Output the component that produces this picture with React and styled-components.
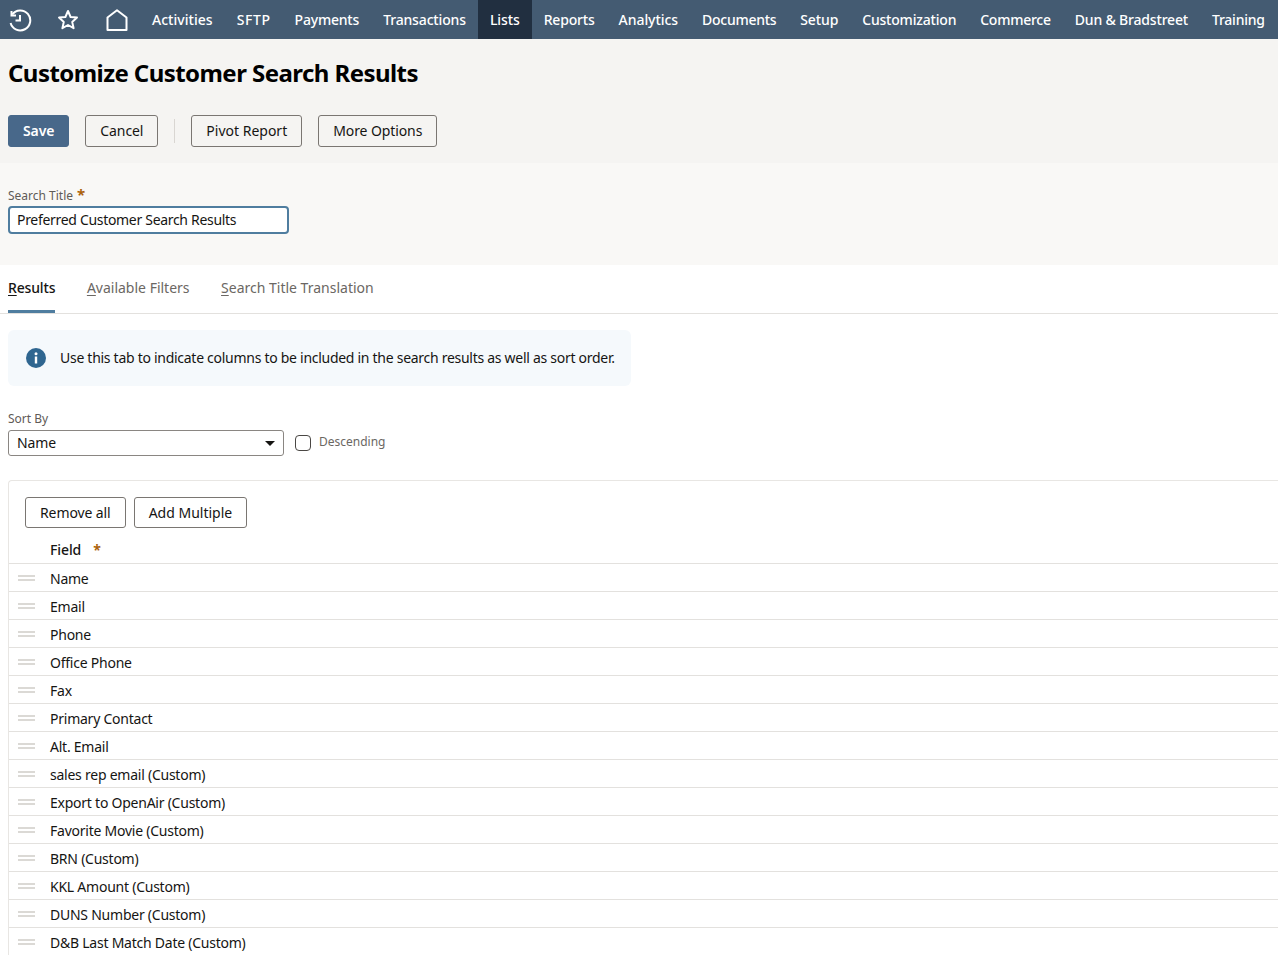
import styled, { createGlobalStyle } from 'styled-components';

const GlobalStyle = createGlobalStyle`
  html, body {
    margin: 0;
    padding: 0;
    height: 955px;
    overflow: hidden;
    background: #fff;
    font-family: "Noto Sans", "Open Sans", sans-serif;
    color: #161513;
  }
`;

const NavBar = styled.nav`
  display: flex;
  align-items: stretch;
  height: 39px;
  background: #445b72;
  white-space: nowrap;
`;

const NavIcon = styled.div`
  display: flex;
  flex-shrink: 0;
  align-items: center;
  justify-content: center;
  width: ${(p) => p.$width}px;
  color: #fff;
`;

const NavItem = styled.a`
  display: flex;
  align-items: center;
  padding: 0 12px;
  font-size: 14px;
  font-weight: 500;
  letter-spacing: ${(p) => p.$spacing}px;
  color: #fff;
  background: ${(p) => (p.$active ? '#212f40' : 'transparent')};
`;

const PageHeader = styled.header`
  background: #f5f4f2;
  padding: 17px 8px 16px;
  height: 124px;
  box-sizing: border-box;
`;

const Title = styled.h1`
  margin: 0 0 26px;
  font-size: 24px;
  line-height: 33px;
  font-weight: 700;
  letter-spacing: -0.56px;
  color: #000;
`;

const Toolbar = styled.div`
  display: flex;
  align-items: center;
  gap: 16px;
`;

const Button = styled.button`
  height: 32px;
  padding: 0 14px 2px;
  border: 1px solid #7a7672;
  border-radius: 3px;
  background: transparent;
  font-family: inherit;
  font-size: 14px;
  letter-spacing: -0.1px;
  color: #161513;
`;

const WideButton = styled(Button)`
  letter-spacing: 0;
`;

const PrimaryButton = styled(Button)`
  border-color: #48688a;
  background: #48688a;
  color: #fff;
  font-weight: 600;
`;

const PanelButton = styled(Button)`
  height: 31px;
  padding-bottom: 0;
  letter-spacing: ${(p) => (p.$wide ? '0' : '-0.1px')};
`;

const Divider = styled.span`
  width: 1px;
  height: 24px;
  background: #d9d6d2;
`;

const TitleSection = styled.section`
  background: #f9f8f6;
  height: 102px;
  padding: 24px 8px 0;
  box-sizing: border-box;
`;

const FieldLabel = styled.label`
  display: block;
  font-size: 12px;
  line-height: 18px;
  color: #5f5b57;
`;

const Required = styled.span`
  color: #ac630c;
  font-size: 15px;
  line-height: 0;
  font-weight: 700;
  margin-left: 4px;
`;

const TitleInput = styled.input`
  display: block;
  width: 281px;
  height: 28px;
  box-sizing: border-box;
  margin-top: 1px;
  padding: 0 7px 2px;
  border: 2px solid #4f7d9f;
  border-radius: 4px;
  background: #fff;
  font-family: inherit;
  font-size: 14px;
  letter-spacing: -0.31px;
  color: #161513;
`;

const Tabs = styled.div`
  display: flex;
  gap: 31.5px;
  height: 49px;
  box-sizing: border-box;
  padding: 0 8px;
  border-bottom: 1px solid #e3e1de;
`;

const Tab = styled.div`
  display: flex;
  align-items: center;
  height: 48px;
  box-sizing: border-box;
  font-size: 14px;
  letter-spacing: ${(p) => (p.$active ? '-0.15px' : '0')};
  color: ${(p) => (p.$active ? '#161513' : '#6b6763')};
  font-weight: ${(p) => (p.$active ? 500 : 400)};
  border-bottom: 3px solid ${(p) => (p.$active ? '#4f7d9f' : 'transparent')};
  u {
    text-underline-offset: 2px;
  }
`;

const Content = styled.main`
  padding: 16px 0 0 8px;
`;

const InfoBox = styled.div`
  display: flex;
  align-items: center;
  gap: 14px;
  width: 623px;
  height: 56px;
  box-sizing: border-box;
  padding: 0 18px;
  border-radius: 6px;
  background: #f5f9fc;
  font-size: 14px;
  letter-spacing: -0.28px;
  white-space: nowrap;
  color: #161513;

  svg {
    flex-shrink: 0;
  }
`;

const InfoText = styled.span`
  margin-top: -2px;
`;

const SortSection = styled.div`
  margin-top: 24px;
`;

const SortRow = styled.div`
  display: flex;
  align-items: center;
  gap: 11px;
  margin-top: 2px;
`;

const SelectBox = styled.div`
  display: flex;
  align-items: center;
  justify-content: space-between;
  width: 276px;
  height: 26px;
  box-sizing: border-box;
  padding: 0 8px 2px;
  border: 1px solid #8a8682;
  border-radius: 3px;
  font-size: 14px;
  letter-spacing: -0.1px;
  color: #161513;
`;

const Caret = styled.span`
  width: 0;
  height: 0;
  margin-top: 2px;
  border-left: 5px solid transparent;
  border-right: 5px solid transparent;
  border-top: 5px solid #161513;
`;

const CheckBox = styled.span`
  width: 16px;
  height: 16px;
  box-sizing: border-box;
  border: 1px solid #4a4744;
  border-radius: 4px;
  background: #fff;
`;

const CheckLabel = styled.span`
  font-size: 12px;
  color: #6b6763;
  margin-left: -3px;
  margin-top: -4px;
`;

const Panel = styled.div`
  margin-top: 24px;
  border: 1px solid #e8e6e3;
  border-right: none;
  border-bottom: none;
  border-top-left-radius: 4px;
`;

const PanelActions = styled.div`
  display: flex;
  gap: 8px;
  padding: 16px 16px 0;
`;

const HeaderCell = styled.div`
  height: 36px;
  box-sizing: border-box;
  padding: 9px 0 0 41px;
  font-size: 14px;
  line-height: 26px;
  font-weight: 500;
  letter-spacing: -0.1px;
  border-bottom: 1px solid #e3e1de;
  color: #161513;
`;

const HeaderStar = styled.span`
  color: #ac630c;
  margin-left: 12px;
  font-size: 14px;
  font-weight: 700;
`;

const Row = styled.div`
  display: flex;
  align-items: center;
  height: 28px;
  box-sizing: border-box;
  padding-top: 2px;
  border-bottom: 1px solid #e3e1de;
  font-size: 14px;
  letter-spacing: -0.24px;
  color: #161513;
`;

const Handle = styled.span`
  width: 17px;
  height: 2px;
  margin: -1px 15px 0 9px;
  border-top: 2px solid #dbd9d5;
  border-bottom: 2px solid #dbd9d5;
`;

const navItems = [
  { label: 'Activities', spacing: 0.03 },
  { label: 'SFTP', spacing: 0.6 },
  { label: 'Payments', spacing: -0.2 },
  { label: 'Transactions', spacing: -0.15 },
  { label: 'Lists', spacing: -0.1 },
  { label: 'Reports', spacing: -0.18 },
  { label: 'Analytics', spacing: -0.05 },
  { label: 'Documents', spacing: -0.28 },
  { label: 'Setup', spacing: -0.12 },
  { label: 'Customization', spacing: -0.2 },
  { label: 'Commerce', spacing: -0.25 },
  { label: 'Dun & Bradstreet', spacing: -0.18 },
  { label: 'Training', spacing: -0.25 },
];

const fields = ['Name', 'Email', 'Phone', 'Office Phone', 'Fax', 'Primary Contact', 'Alt. Email', 'sales rep email (Custom)', 'Export to OpenAir (Custom)', 'Favorite Movie (Custom)', 'BRN (Custom)', 'KKL Amount (Custom)', 'DUNS Number (Custom)', 'D&B Last Match Date (Custom)'];

export default function App() {
  return (
    <>
      <GlobalStyle />
      <NavBar>
        <NavIcon $width={39}>
          <svg width="24" height="24" viewBox="0 0 24 24" fill="none" stroke="#fff" strokeWidth="2">
            <path d="M4.2 6.5A10 10 0 1 1 2.6 15" />
            <path d="M3.5 3v4.500H8" />
            <path d="M12 7v5.500H7.500" />
          </svg>
        </NavIcon>
        <NavIcon $width={58}>
          <svg width="22" height="22" viewBox="0 0 22 22" fill="none" stroke="#fff" strokeWidth="2" strokeLinejoin="round">
            <path d="M11 2l2.600 6 6.400.6-4.800 4.300 1.400 6.300L11 16l-5.600 3.200 1.400-6.300L2 8.600 8.400 8z" />
          </svg>
        </NavIcon>
        <NavIcon $width={40}>
          <svg width="22" height="22" viewBox="0 0 22 22" fill="none" stroke="#fff" strokeWidth="2">
            <path d="M1.500 21V8.500L11 1.300l9.500 7.200V21z" strokeLinejoin="round" />
          </svg>
        </NavIcon>
        <NavIcon $width={3} />
        {navItems.map((item) => (
          <NavItem key={item.label} $active={item.label === 'Lists'} $spacing={item.spacing}>{item.label}</NavItem>
        ))}
      </NavBar>
      <PageHeader>
        <Title>Customize Customer Search Results</Title>
        <Toolbar>
          <PrimaryButton>Save</PrimaryButton>
          <Button>Cancel</Button>
          <Divider />
          <WideButton>Pivot Report</WideButton>
          <Button>More Options</Button>
        </Toolbar>
      </PageHeader>
      <TitleSection>
        <FieldLabel>Search Title<Required>*</Required></FieldLabel>
        <TitleInput readOnly value="Preferred Customer Search Results" />
      </TitleSection>
      <Tabs>
        <Tab $active><span><u>R</u>esults</span></Tab>
        <Tab><span><u>A</u>vailable Filters</span></Tab>
        <Tab><span><u>S</u>earch Title Translation</span></Tab>
      </Tabs>
      <Content>
        <InfoBox>
          <svg width="20" height="20" viewBox="0 0 20 20">
            <circle cx="10" cy="10" r="10" fill="#2f6690" />
            <rect x="8.800" y="8.500" width="2.400" height="7" fill="#fff" />
            <circle cx="10" cy="5.800" r="1.500" fill="#fff" />
          </svg>
          <InfoText>Use this tab to indicate columns to be included in the search results as well as sort order.</InfoText>
        </InfoBox>
        <SortSection>
          <FieldLabel>Sort By</FieldLabel>
          <SortRow>
            <SelectBox>Name<Caret /></SelectBox>
            <CheckBox />
            <CheckLabel>Descending</CheckLabel>
          </SortRow>
        </SortSection>
        <Panel>
          <PanelActions>
            <PanelButton>Remove all</PanelButton>
            <PanelButton $wide>Add Multiple</PanelButton>
          </PanelActions>
          <HeaderCell>Field<HeaderStar>*</HeaderStar></HeaderCell>
          {fields.map((field) => (
            <Row key={field}><Handle />{field}</Row>
          ))}
        </Panel>
      </Content>
    </>
  );
}
